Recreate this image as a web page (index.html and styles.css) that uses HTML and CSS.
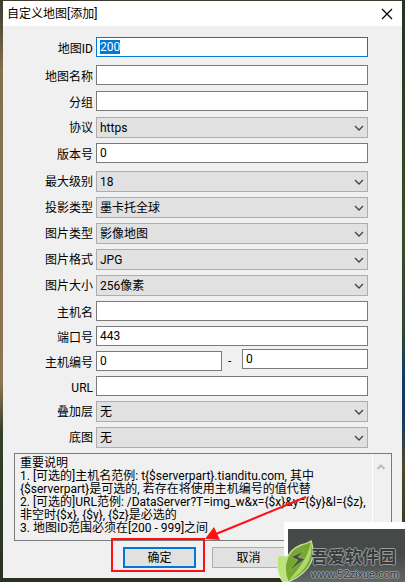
FILE: index.html
```html
<!DOCTYPE html>
<html lang="zh-CN">
<head>
<meta charset="utf-8">
<meta name="viewport" content="width=device-width, initial-scale=1">
<title>自定义地图[添加]</title>
<link rel="stylesheet" href="styles.css">
</head>
<body>
<div class="desktop">
  <main class="dialog">
    <header class="titlebar">
      <h1 class="title">自定义地图[添加]</h1>
      <button class="close" type="button" aria-label="关闭">
        <svg width="12" height="12" viewBox="0 0 12 12"><path d="M1 1L11 11M11 1L1 11" stroke="#000" stroke-width="1.2" fill="none"/></svg>
      </button>
    </header>
    <form>
      <div class="fields">
        <div class="row text spaced"><label for="mapid">地图ID</label><input id="mapid" class="control" type="text" value="200"></div>
        <div class="row text loose"><label for="name">地图名称</label><input id="name" class="control" type="text"></div>
        <div class="row text loose"><label for="group">分组</label><input id="group" class="control" type="text"></div>
        <div class="row"><label for="protocol">协议</label><select id="protocol" class="control"><option>https</option></select></div>
        <div class="row text spaced"><label for="version">版本号</label><input id="version" class="control" type="text" value="0"></div>
        <div class="row"><label for="level">最大级别</label><select id="level" class="control"><option>18</option></select></div>
        <div class="row"><label for="projection">投影类型</label><select id="projection" class="control"><option>墨卡托全球</option></select></div>
        <div class="row"><label for="type">图片类型</label><select id="type" class="control"><option>影像地图</option></select></div>
        <div class="row"><label for="format">图片格式</label><select id="format" class="control"><option>JPG</option></select></div>
        <div class="row"><label for="size">图片大小</label><select id="size" class="control"><option>256像素</option></select></div>
        <div class="row text"><label for="host">主机名</label><input id="host" class="control" type="text"></div>
        <div class="row text"><label for="port">端口号</label><input id="port" class="control" type="text" value="443"></div>
        <div class="row text"><label for="from">主机编号</label>
          <div class="range"><input id="from" class="control" type="text" value="0"><span class="dash">-</span><input class="control upper" type="text" value="0" aria-label="主机编号上限"></div>
        </div>
        <div class="row text"><label for="url">URL</label><input id="url" class="control" type="text"></div>
        <div class="row"><label for="overlay">叠加层</label><select id="overlay" class="control"><option>无</option></select></div>
        <div class="row"><label for="base">底图</label><select id="base" class="control"><option>无</option></select></div>
      </div>
      <div class="notes">
        <textarea class="notes-text" readonly aria-label="重要说明" rows="6">重要说明
1. [可选的]主机名范例: t{$serverpart}.tianditu.com, 其中
{$serverpart}是可选的, 若存在将使用主机编号的值代替
2. [可选的]URL范例: /DataServer?T=img_w&amp;x={$x}&amp;y={$y}&amp;l={$z},
非空时{$x}, {$y}, {$z}是必选的
3. 地图ID范围必须在[200 - 999]之间</textarea>
        <div class="scrollbar"><svg width="10" height="8" viewBox="0 0 10 8"><path d="M1.5 6L5 2.5L8.500 6" stroke="#bdbdbd" stroke-width="2" fill="none"/></svg></div>
      </div>
      <div class="actions">
        <button class="button primary" type="button">确定</button>
        <button class="button" type="button">取消</button>
      </div>
    </form>
    <svg class="callout" width="200" height="82" viewBox="0 0 200 82" aria-hidden="true">
      <rect x="2" y="45" width="92" height="32" fill="none" stroke="#ff1014" stroke-width="2"/>
      <path d="M196 3L106 40" stroke="#ff1014" stroke-width="2" fill="none"/>
      <path d="M95 45L104 33L110 46Z" fill="#ff1014"/>
    </svg>
  </main>
  <aside class="watermark">
    <svg class="leaf" width="40" height="42" viewBox="0 0 40 42" aria-hidden="true">
      <path d="M1 16C8 15 13 17 16 21L10 42H6C1 36 -1 25 1 16Z" fill="#bce474" stroke="#dcecc8"/>
      <path d="M34 1C39 15 36 31 11 42C6 31 6 12 24 5C28 4 31 3 34 1Z" fill="#75a82c" stroke="#c3dda0" stroke-width="1.500"/>
      <path d="M34 2C36 17 31 30 12 41C18 31 29 24 34 2Z" fill="#b0d76a"/>
      <path d="M27 11L14 17L21 20L12 31L28 19L21 17Z" fill="#46503b" stroke="#adc68d" stroke-width="0.500"/>
    </svg>
    <div class="brand">吾爱软件园</div>
    <div class="site">www.52zixue.com</div>
  </aside>
</div>
<script src="script.js"></script>
</body>
</html>
```
FILE: script.js
```js
const mapId = document.getElementById("mapid");
mapId.focus();
mapId.select();
```
FILE: styles.css
```css
* { box-sizing: border-box; }

body, input, select, textarea, button {
  font-family: Roboto, "Noto Sans CJK SC", sans-serif;
  font-size: 12px;
  color: #000;
}

body { margin: 0; }

.desktop {
  position: relative;
  min-height: 100vh;
  padding: 1px 3px 3px;
  overflow: hidden;
  background: linear-gradient(#3c3a2c 0, #83704f 12%, #8c7552 66%, #35402b 74%, #28321f 100%);
}

.desktop::after {
  content: "";
  position: absolute;
  top: 0;
  right: 0;
  width: 3px;
  height: 100%;
  background: linear-gradient(#26331e 0, #3c4a2c 40%, #2c4631 58%, #123b65 65%, #153b5d 72%, #4c4832 80%, #29301f 100%);
}

.dialog {
  position: relative;
  background: #f0f0f0;
  padding-bottom: 10px;
}

.titlebar {
  display: flex;
  align-items: center;
  justify-content: space-between;
  height: 25px;
  padding: 0 9px 0 4px;
  background: #fff;
}

.title { margin: 0; font-size: 12px; font-weight: 400; line-height: 24px; }

.close {
  display: flex;
  padding: 0;
  border: 0;
  background: none;
}

.fields { padding: 11px 34px 0 11px; }

.row {
  display: flex;
  align-items: center;
  height: 21px;
  margin-bottom: 5px;
}

.row.text { height: 20px; }
.row.loose { margin-bottom: 6px; }
.row.spaced { margin-bottom: 8px; }

label {
  flex: 0 0 82px;
  padding-right: 3px;
  line-height: 16px;
  text-align: right;
  white-space: nowrap;
}

.text label { padding-top: 4px; }

.control {
  flex: 1;
  min-width: 0;
  width: 100%;
  height: 100%;
  margin: 0;
  padding: 0 3px;
  border: 1px solid #7a7a7a;
  border-radius: 0;
  background: #fff;
  line-height: 16px;
  outline: 0;
}

.control:focus { border-color: #0078d7; }
.control::selection { background: #0078d7; color: #fff; }

select.control {
  appearance: none;
  border-color: #adadad;
  background: #e1e1e1 url("data:image/svg+xml,%3Csvg xmlns='http://www.w3.org/2000/svg' width='10' height='6' viewBox='0 0 10 6'%3E%3Cpath d='M1 1L5 5L9 1' fill='none' stroke='%23444' stroke-width='1.3'/%3E%3C/svg%3E") no-repeat right 3px center;
}

.range { flex: 1; display: flex; height: 100%; min-width: 0; }
.dash { flex: 0 0 20px; padding-left: 6px; line-height: 20px; }
.upper { position: relative; top: -2px; }

.notes {
  display: flex;
  margin: 0 10px 0 11px;
  border: 1px solid #7a7a7a;
}

.notes-text {
  flex: 1;
  min-width: 0;
  height: 86px;
  margin: 0;
  padding: 3px 5px;
  border: 0;
  background: none;
  line-height: 13px;
  white-space: pre;
  overflow: hidden;
  resize: none;
  outline: 0;
}

.scrollbar {
  flex: 0 0 19px;
  padding: 6px 0 0 3px;
  border-left: 1px solid #fff;
}

.actions {
  display: flex;
  justify-content: center;
  gap: 16px;
  margin: 6px 0 0 3px;
}

.button {
  width: 73px;
  height: 21px;
  padding: 0;
  border: 1px solid #adadad;
  background: #e1e1e1;
  line-height: 16px;
}

.primary { border: 2px solid #0078d7; }

.callout {
  position: absolute;
  left: 107px;
  bottom: 2px;
}

.watermark {
  position: absolute;
  z-index: 1;
  right: 0;
  bottom: 0;
  width: 121px;
  height: 60px;
  padding: 17px 0 0 23px;
  border: solid #fff;
  border-width: 7px 0 0 4px;
  background: linear-gradient(#454948 0, #454948 50%, #626665 100%);
  white-space: nowrap;
}

.leaf {
  position: absolute;
  left: -11px;
  bottom: 0;
}

.brand,
.site {
  position: relative;
  color: #363a39;
  text-shadow: 1px 0 #9a9d9c, -1px 0 #9a9d9c, 0 1px #9a9d9c, 0 -1px #9a9d9c;
}

.brand {
  font-size: 17px;
  font-weight: 700;
  line-height: 22px;
}

.site {
  font-family: "Liberation Sans", sans-serif;
  font-size: 11px;
  line-height: 12px;
}
```
